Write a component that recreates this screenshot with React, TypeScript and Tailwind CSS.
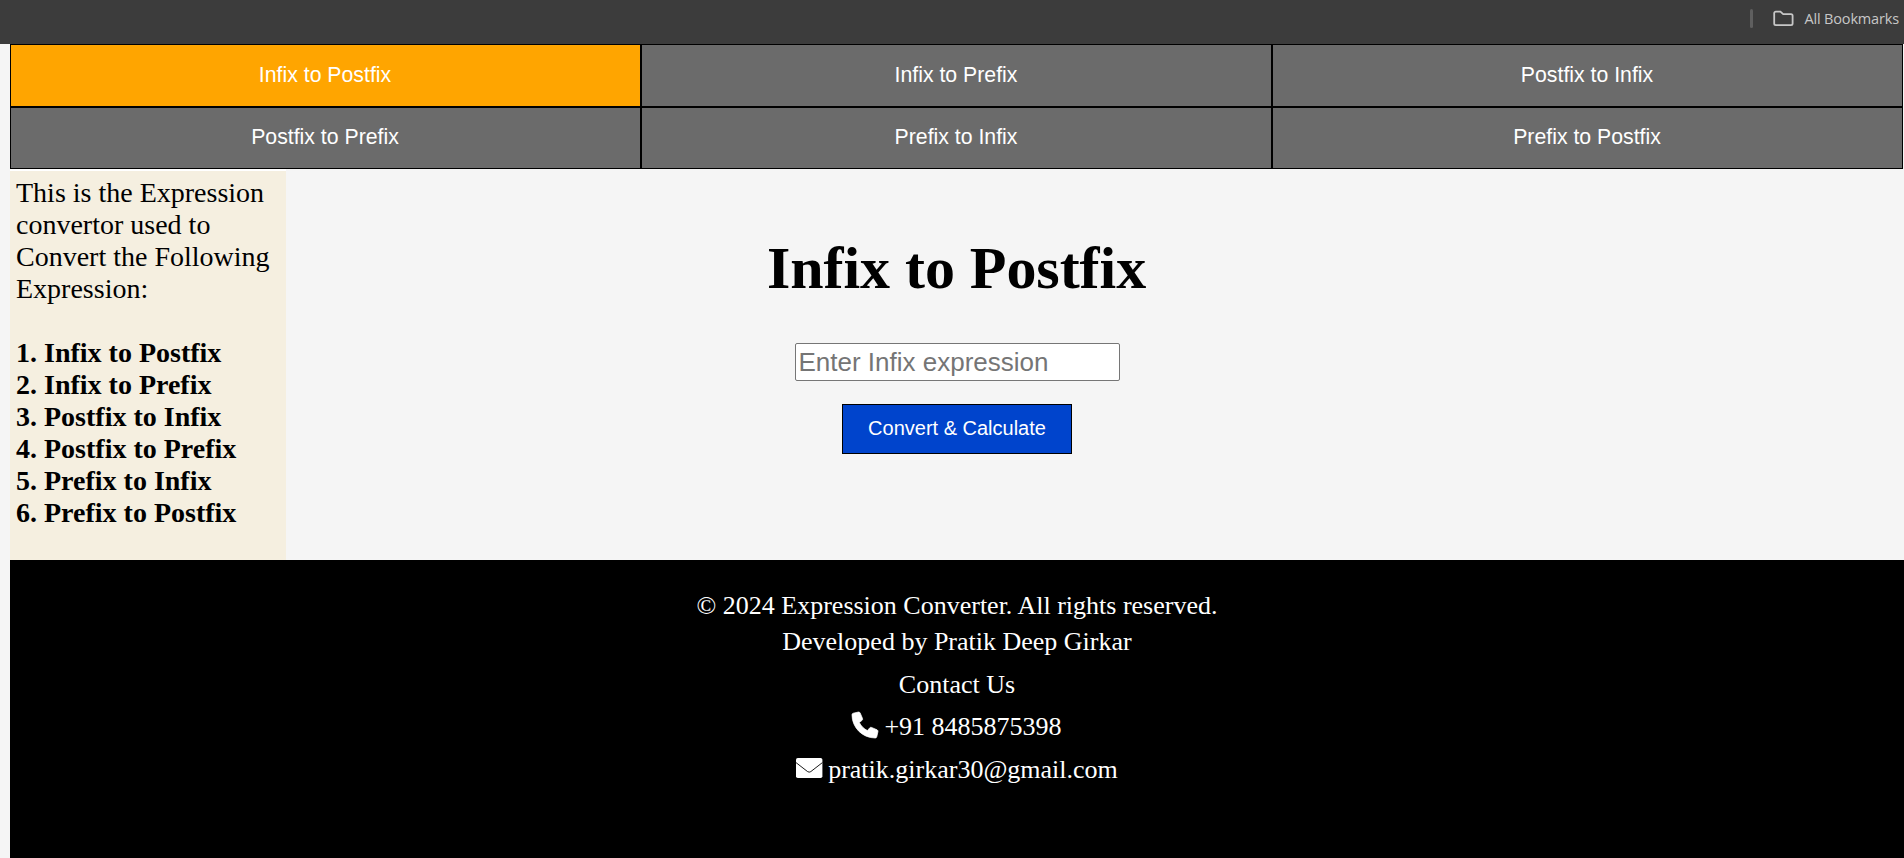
const modes = [
  "Infix to Postfix",
  "Infix to Prefix",
  "Postfix to Infix",
  "Postfix to Prefix",
  "Prefix to Infix",
  "Prefix to Postfix",
];

function PhoneIcon() {
  return (
    <svg className="mt-[3px] mr-[6px] size-[26px] overflow-visible" viewBox="0 0 512 512" fill="currentColor" stroke="currentColor" strokeWidth="14" strokeLinejoin="round">
      <path d="M511.2 387l-23.25 100.8c-3.266 14.25-15.79 24.22-30.46 24.22C205.2 512 0 306.8 0 54.5c0-14.66 9.969-27.2 24.22-30.45l100.8-23.25C139.7-2.602 154.7 5.018 160.8 18.92l46.52 108.5c5.438 12.78 1.77 27.67-8.98 36.45L144.5 207.1c33.98 69.22 90.26 125.5 159.5 159.5l44.08-53.8c8.688-10.78 23.69-14.51 36.47-8.975l108.5 46.51C506.1 357.2 514.6 372.4 511.2 387z" />
    </svg>
  );
}

function EnvelopeIcon() {
  return (
    <svg className="mt-[6px] mr-[6px] h-5 w-[26px] overflow-visible" viewBox="0 0 26 20">
      <rect width="26.4" height="20" rx="1.8" fill="currentColor" />
      <path d="M0 4.6 11.6 13.6Q13.2 14.7 14.8 13.6L26.4 4.6" fill="none" stroke="black" strokeWidth="0.9" />
    </svg>
  );
}

function BookmarksBar() {
  return (
    <div className="flex h-11 items-start justify-end bg-[#3c3c3c] pr-[5px] font-['Open_Sans','Noto_Sans',sans-serif] text-[#c7c7c7]">
      <div className="mt-[9px] mr-5 h-[19px] w-[3px] rounded-full bg-[#5f5f5f]" />
      <svg className="mt-[10px] mr-[10px] h-[17px] w-[21px]" viewBox="0 0 21 17" fill="none" stroke="currentColor" strokeWidth="1.8">
        <path d="M1.2 3.2a1.6 1.6 0 0 1 1.6-1.6h4.6l2.8 2.6h7.8a1.6 1.6 0 0 1 1.6 1.6v7.8a1.6 1.6 0 0 1-1.6 1.6H2.8a1.6 1.6 0 0 1-1.6-1.6z" />
      </svg>
      <span className="mt-[9px] text-[14.5px] leading-5 tracking-[-0.16px] whitespace-nowrap">All Bookmarks</span>
    </div>
  );
}

function ModeTabs() {
  return (
    <nav className="grid w-[1893px] grid-cols-3 grid-rows-[63px_62px] font-['Liberation_Sans',Arial,sans-serif] text-[21.25px] text-white">
      {modes.map((mode, i) => (
        <button
          key={mode}
          className={`border border-black pr-px ${i < 3 ? "pt-px" : "pb-px"} ${i === 0 ? "bg-[#ffa500]" : "bg-[#6b6b6b]"}`}
        >
          {mode}
        </button>
      ))}
    </nav>
  );
}

function Sidebar() {
  return (
    <aside className="w-[276px] shrink-0 border-t-2 border-white bg-[#f5efe0] px-1.5 pt-[6px] text-[28px] leading-8">
      <p>
        This is the Expression convertor used to Convert the Following Expression:
      </p>
      <ol className="mt-8 font-bold">
        {modes.map((mode, i) => (
          <li key={mode}>
            {i + 1}. {mode}
          </li>
        ))}
      </ol>
    </aside>
  );
}

function Converter() {
  return (
    <main className="flex grow flex-col items-center pr-[276px]">
      <h1 className="mt-[65px] pr-px text-[60px] leading-[68px] font-bold tracking-[-0.05px]">Infix to Postfix</h1>
      <input
        className="mt-[41px] h-[38px] w-[325px] rounded-[2px] border border-[#767676] bg-white px-[3px] pt-px font-['Liberation_Sans',Arial,sans-serif] text-[26px] placeholder:text-[#757575]"
        placeholder="Enter Infix expression"
      />
      <button className="mt-[23px] h-[50px] w-[230px] border border-black bg-[#0044cc] pb-[3px] font-['Liberation_Sans',Arial,sans-serif] text-[20px] text-white">
        Convert &amp; Calculate
      </button>
    </main>
  );
}

function Footer() {
  return (
    <footer className="flex grow flex-col items-center bg-black pt-7 text-[26px] leading-9 text-white">
      <p>© 2024 Expression Converter. All rights reserved.</p>
      <p>Developed by Pratik Deep Girkar</p>
      <p className="mt-[7px]">Contact Us</p>
      <p className="mt-[6px] flex">
        <PhoneIcon />
        +91 8485875398
      </p>
      <p className="mt-[7px] flex">
        <EnvelopeIcon />
        pratik.girkar30@gmail.com
      </p>
    </footer>
  );
}

export default function App() {
  return (
    <div className="flex h-[858px] w-[1904px] flex-col overflow-hidden bg-[#f5f5f5] font-['Liberation_Serif','Times_New_Roman',serif] text-black">
      <BookmarksBar />
      <div className="flex grow flex-col pl-[10px]">
        <ModeTabs />
        <div className="flex h-[391px]">
          <Sidebar />
          <Converter />
        </div>
        <Footer />
      </div>
    </div>
  );
}
